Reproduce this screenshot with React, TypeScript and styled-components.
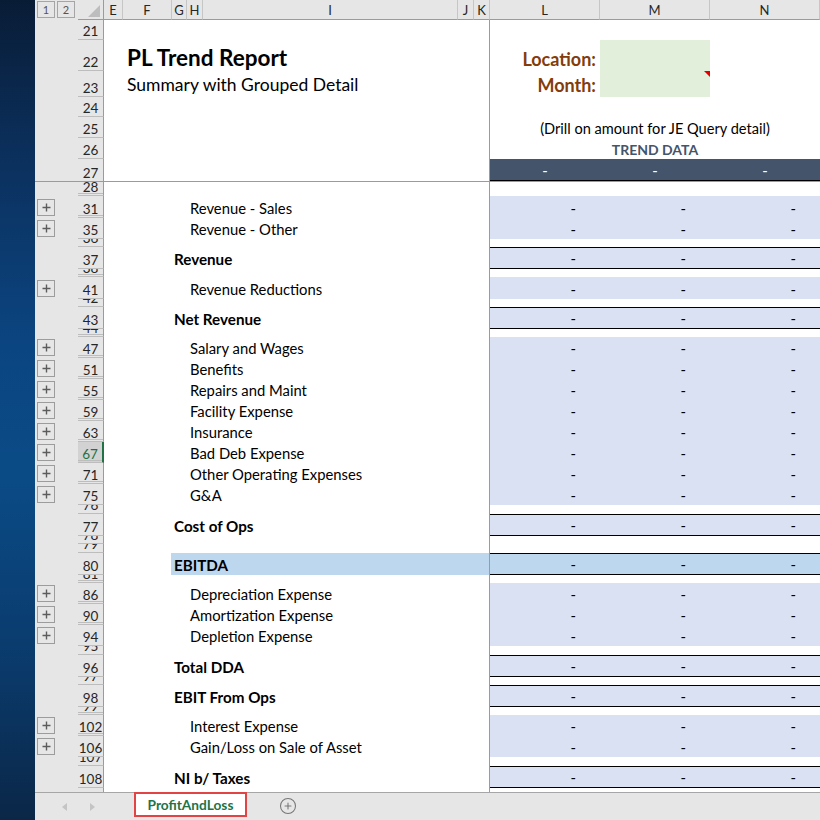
import React from 'react';
import styled, { createGlobalStyle, css } from 'styled-components';
import { CirclePlus } from 'lucide-react';

const FONT = `Lato, "Open Sans", "Noto Sans", sans-serif`;

const GlobalStyle = createGlobalStyle`
  html, body { margin: 0; padding: 0; background: #fff; }
  body { width: 820px; height: 820px; overflow: hidden; font-family: ${FONT}; }
  *, *::before, *::after { box-sizing: border-box; }
`;

const GRID = '43px 26px 386px 110px 110px 110px';
const HEAD_GRID = '43px 26px 19px 49px 15px 16px 255px 16px 16px 110px 110px 110px';

const Screen = styled.div`
  display: flex;
  width: 820px;
  height: 820px;
  overflow: hidden;
`;

const Desktop = styled.div`
  flex: 0 0 35px;
  background: linear-gradient(
    180deg,
    #091c36 0%,
    #0b2f5b 18%,
    #0b4581 42%,
    #0a4b86 58%,
    #0a3b6d 80%,
    #0a2747 100%
  );
`;

const Workbook = styled.div`
  flex: 1 1 auto;
  min-width: 0;
  display: flex;
  flex-direction: column;
  background: #fff;
`;

/* ---------- column header bar ---------- */
const ColumnBar = styled.div`
  flex: 0 0 20px;
  display: grid;
  grid-template-columns: ${HEAD_GRID};
  background: #e6e6e6;
`;

const LevelButtons = styled.div`
  display: flex;
  gap: 2px;
  padding: 1px 0 0 2px;
`;

const LevelButton = styled.div`
  width: 18px;
  height: 17px;
  border: 1px solid #a5a5a5;
  display: flex;
  align-items: center;
  justify-content: center;
  font-size: 11px;
  color: #555;
`;

const Corner = styled.div`
  border-right: 1px solid #9b9b9b;
  border-bottom: 1px solid #9b9b9b;
  display: flex;
  align-items: flex-end;
  justify-content: flex-end;
  padding: 0 3px 2px 0;
`;

const ColLetter = styled.div`
  border-right: 1px solid #c6c6c6;
  border-bottom: 1px solid #9b9b9b;
  display: flex;
  align-items: center;
  justify-content: center;
  font-size: 13px;
  color: #262626;
`;

/* ---------- sheet ---------- */
const Sheet = styled.div`
  flex: 1 1 auto;
  min-height: 0;
  overflow: hidden;
  display: flex;
  flex-direction: column;
`;

const Row = styled.div<{ $h: number; $freeze?: boolean }>`
  flex: 0 0 ${(p) => p.$h}px;
  height: ${(p) => p.$h}px;
  display: grid;
  grid-template-columns: ${GRID};
  ${(p) =>
    p.$freeze &&
    css`
      border-bottom: 1px solid #9b9b9b;
    `}
`;

const Outline = styled.div`
  background: #e6e6e6;
  display: flex;
  align-items: center;
  padding-left: 2px;
`;

const ToggleBox = styled.div`
  width: 18px;
  height: 17px;
  border: 1px solid #9c9c9c;
  display: flex;
  align-items: center;
  justify-content: center;
`;

const RowHead = styled.div<{ $sel?: boolean; $gap?: boolean; $flat?: boolean }>`
  background-color: ${(p) => (p.$sel ? '#d2d2d2' : '#e6e6e6')};
  color: ${(p) => (p.$sel ? '#217346' : '#262626')};
  border-right: ${(p) => (p.$sel ? '2px solid #217346' : '1px solid #9b9b9b')};
  border-bottom: ${(p) => (p.$flat ? 'none' : '1px solid #bdbdbd')};
  ${(p) =>
    p.$gap &&
    css`
      background-image: linear-gradient(#bdbdbd, #bdbdbd);
      background-size: 100% 1px;
      background-repeat: no-repeat;
      background-position: 0 calc(100% - 1px);
    `}
  display: flex;
  align-items: flex-end;
  justify-content: center;
  overflow: hidden;
  font-size: 13.5px;
  line-height: 15px;
  padding-bottom: 0;
`;

const LabelCell = styled.div<{ $indent?: number }>`
  background: #fff;
  border-right: 1px solid #9b9b9b;
  display: flex;
  align-items: stretch;
  padding-left: ${(p) => p.$indent ?? 0}px;
  overflow: hidden;
  white-space: nowrap;
`;

const Label = styled.div<{ $bold?: boolean; $hl?: boolean }>`
  flex: 1 1 auto;
  display: flex;
  align-items: flex-end;
  padding: 0 0 1px ${(p) => (p.$hl ? 3 : 0)}px;
  background: ${(p) => (p.$hl ? '#bdd7ee' : 'transparent')};
  font-size: ${(p) => (p.$bold ? 15.2 : 14.8)}px;
  line-height: 17px;
  font-weight: ${(p) => (p.$bold ? 700 : 400)};
  color: #000;
`;

type Band = 'none' | 'blue' | 'hl';

const DataCell = styled.div<{ $band: Band; $rule?: boolean }>`
  background: ${(p) => (p.$band === 'blue' ? '#d9e1f2' : p.$band === 'hl' ? '#bdd7ee' : '#fff')};
  ${(p) =>
    p.$rule &&
    css`
      border-top: 1px solid #000;
      border-bottom: 1px solid #000;
    `}
  display: flex;
  align-items: flex-end;
  justify-content: flex-end;
  padding: 0 24px 1px 0;
  font-size: 14.8px;
  line-height: 17px;
  color: #000;
`;

/* ---------- report header parts ---------- */
const TitleText = styled.div`
  align-self: flex-end;
  font-size: 22.5px;
  line-height: 25px;
  font-weight: 700;
  color: #000;
  padding-bottom: 1px;
`;

const SubtitleText = styled.div`
  align-self: flex-end;
  font-size: 17.5px;
  line-height: 20px;
  color: #000;
  padding-bottom: 2px;
`;

const PromptCell = styled.div<{ $pb: number }>`
  background: #fff;
  display: flex;
  align-items: flex-end;
  justify-content: flex-end;
  padding: 0 4px ${(p) => p.$pb}px 0;
  font-size: 18px;
  line-height: 20px;
  font-weight: 700;
  color: #843c0c;
`;

const InputCell = styled.div<{ $comment?: boolean }>`
  background: #e2efda;
  position: relative;
  ${(p) =>
    p.$comment &&
    css`
      &::after {
        content: '';
        position: absolute;
        top: 0;
        right: 0;
        border-style: solid;
        border-width: 0 6px 6px 0;
        border-color: transparent #e00000 transparent transparent;
      }
    `}
`;

const Banner = styled.div<{ $strong?: boolean }>`
  grid-column: 4 / span 3;
  background: #fff;
  display: flex;
  align-items: flex-end;
  justify-content: center;
  white-space: nowrap;
  ${(p) =>
    p.$strong
      ? css`
          font-size: 14px;
          line-height: 16px;
          font-weight: 700;
          color: #44546a;
          padding-bottom: 1px;
        `
      : css`
          font-size: 14.6px;
          line-height: 17px;
          color: #000;
          padding-bottom: 1px;
        `}
`;

const HeadBar = styled.div`
  background: #44546a;
  border-bottom: 1px solid #000;
  display: flex;
  align-items: center;
  justify-content: center;
  color: #fff;
  font-size: 14.8px;
  line-height: 17px;
  padding-top: 2px;
`;

/* ---------- tab bar ---------- */
const TabBar = styled.div`
  flex: 0 0 28px;
  background: #e6e6e6;
  border-top: 1px solid #a6a6a6;
  display: flex;
  align-items: flex-start;
`;

const Nav = styled.div`
  flex: 0 0 99px;
  display: flex;
  gap: 23px;
  padding: 10px 0 0 27px;
`;

const SheetTab = styled.div`
  flex: 0 0 113px;
  height: 25px;
  margin-top: -1px;
  background: #fff;
  border: 2px solid #e04444;
  display: flex;
  align-items: center;
  justify-content: center;
  font-size: 13.7px;
  font-weight: 700;
  color: #217346;
`;

const AddSheet = styled.div`
  margin: 4px 0 0 32px;
  display: flex;
  color: #767676;
`;

/* ---------- data ---------- */
type Kind = 'spacer' | 'detail' | 'total' | 'ebitda';
interface LineRow {
  n: number;
  h: number;
  kind: Kind;
  label?: string;
  selected?: boolean;
}

const D = (n: number, label: string, h = 21, selected = false): LineRow => ({ n, h, kind: 'detail', label, selected });
const S = (n: number, h: number): LineRow => ({ n, h, kind: 'spacer' });
const T = (n: number, label: string): LineRow => ({ n, h: 22, kind: 'total', label });

const lines: LineRow[] = [
  S(28, 14),
  D(31, 'Revenue - Sales', 22),
  D(35, 'Revenue - Other'),
  S(36, 8),
  T(37, 'Revenue'),
  S(38, 8),
  D(41, 'Revenue Reductions', 22),
  S(42, 8),
  T(43, 'Net Revenue'),
  S(44, 8),
  D(47, 'Salary and Wages'),
  D(51, 'Benefits'),
  D(55, 'Repairs and Maint'),
  D(59, 'Facility Expense'),
  D(63, 'Insurance'),
  D(67, 'Bad Deb Expense', 21, true),
  D(71, 'Other Operating Expenses'),
  D(75, 'G&A'),
  S(76, 9),
  T(77, 'Cost of Ops'),
  S(78, 8),
  S(79, 9),
  { n: 80, h: 22, kind: 'ebitda', label: 'EBITDA' },
  S(81, 8),
  D(86, 'Depreciation Expense'),
  D(90, 'Amortization Expense'),
  D(94, 'Depletion Expense'),
  S(95, 9),
  T(96, 'Total DDA'),
  S(97, 8),
  T(98, 'EBIT From Ops'),
  S(99, 8),
  D(102, 'Interest Expense'),
  D(106, 'Gain/Loss on Sale of Asset'),
  S(107, 9),
  T(108, 'NI b/ Taxes'),
  S(109, 21),
];

const COLS = ['E', 'F', 'G', 'H', 'I', 'J', 'K', 'L', 'M', 'N'];

const PlusGlyph = () => (
  <svg width="9" height="9" viewBox="0 0 9 9">
    <path d="M4.5 0.5v8M0.5 4.5h8" stroke="#5c5c5c" strokeWidth="1.4" fill="none" />
  </svg>
);

const CornerTriangle = () => (
  <svg width="12" height="12" viewBox="0 0 12 12">
    <polygon points="12,0 12,12 0,12" fill="#bdbdbd" />
  </svg>
);

const Arrow = ({ dir }: { dir: 'l' | 'r' }) => (
  <svg width="5" height="8" viewBox="0 0 5 8">
    <polygon points={dir === 'l' ? '5,0 5,8 0,4' : '0,0 0,8 5,4'} fill="#c4c4c4" />
  </svg>
);

const Blank = () => <DataCell $band="none" />;

export default function App() {
  return (
    <>
      <GlobalStyle />
      <Screen>
        <Desktop />
        <Workbook>
          <ColumnBar>
            <LevelButtons>
              <LevelButton>1</LevelButton>
              <LevelButton>2</LevelButton>
            </LevelButtons>
            <Corner>
              <CornerTriangle />
            </Corner>
            {COLS.map((c) => (
              <ColLetter key={c}>{c}</ColLetter>
            ))}
          </ColumnBar>

          <Sheet>
            <Row $h={20}>
              <Outline />
              <RowHead>21</RowHead>
              <LabelCell />
              <Blank />
              <Blank />
              <Blank />
            </Row>
            <Row $h={31}>
              <Outline />
              <RowHead>22</RowHead>
              <LabelCell $indent={23}>
                <TitleText>PL Trend Report</TitleText>
              </LabelCell>
              <PromptCell $pb={2}>Location:</PromptCell>
              <InputCell />
              <Blank />
            </Row>
            <Row $h={26}>
              <Outline />
              <RowHead>23</RowHead>
              <LabelCell $indent={23}>
                <SubtitleText>Summary with Grouped Detail</SubtitleText>
              </LabelCell>
              <PromptCell $pb={2}>Month:</PromptCell>
              <InputCell $comment />
              <Blank />
            </Row>
            <Row $h={20}>
              <Outline />
              <RowHead>24</RowHead>
              <LabelCell />
              <Blank />
              <Blank />
              <Blank />
            </Row>
            <Row $h={21}>
              <Outline />
              <RowHead>25</RowHead>
              <LabelCell />
              <Banner>(Drill on amount for JE Query detail)</Banner>
            </Row>
            <Row $h={21}>
              <Outline />
              <RowHead>26</RowHead>
              <LabelCell />
              <Banner $strong>TREND DATA</Banner>
            </Row>
            <Row $h={23} $freeze>
              <Outline />
              <RowHead $flat>27</RowHead>
              <LabelCell />
              <HeadBar>-</HeadBar>
              <HeadBar>-</HeadBar>
              <HeadBar>-</HeadBar>
            </Row>

            {lines.map((r, i) => {
              const next = lines[i + 1];
              const gap = next ? next.n - r.n > 1 : false;
              const band: Band = r.kind === 'spacer' ? 'none' : r.kind === 'ebitda' ? 'hl' : 'blue';
              const rule = r.kind === 'total' || r.kind === 'ebitda';
              const indent = r.kind === 'detail' ? 86 : r.kind === 'ebitda' ? 67 : 70;
              return (
                <Row key={r.n} $h={r.h}>
                  <Outline>
                    {r.kind === 'detail' && (
                      <ToggleBox>
                        <PlusGlyph />
                      </ToggleBox>
                    )}
                  </Outline>
                  <RowHead $sel={r.selected} $gap={gap}>
                    {r.n}
                  </RowHead>
                  <LabelCell $indent={indent}>
                    {r.label && (
                      <Label $bold={r.kind !== 'detail'} $hl={r.kind === 'ebitda'}>
                        {r.label}
                      </Label>
                    )}
                  </LabelCell>
                  {[0, 1, 2].map((k) => (
                    <DataCell key={k} $band={band} $rule={rule}>
                      {r.kind === 'spacer' ? '' : '-'}
                    </DataCell>
                  ))}
                </Row>
              );
            })}
          </Sheet>

          <TabBar>
            <Nav>
              <Arrow dir="l" />
              <Arrow dir="r" />
            </Nav>
            <SheetTab>ProfitAndLoss</SheetTab>
            <AddSheet>
              <CirclePlus size={18} strokeWidth={1.4} />
            </AddSheet>
          </TabBar>
        </Workbook>
      </Screen>
    </>
  );
}
